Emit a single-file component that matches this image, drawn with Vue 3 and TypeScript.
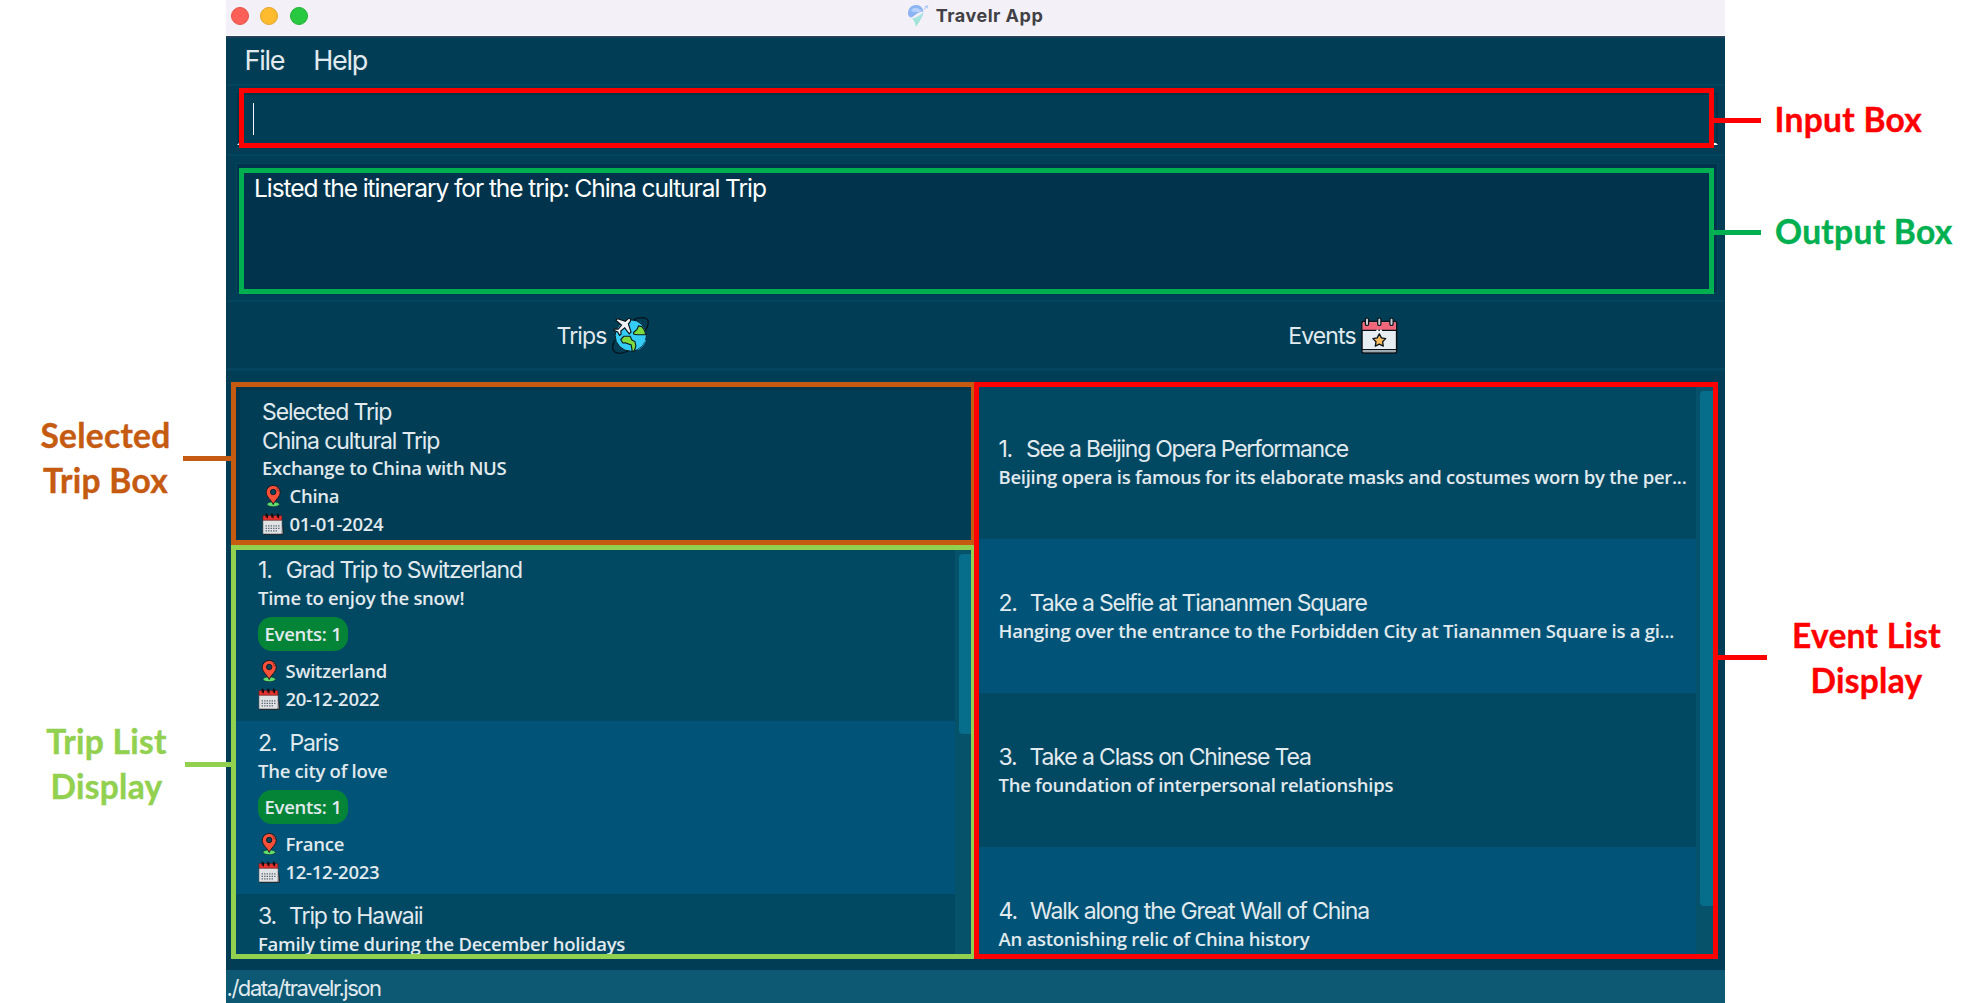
<script setup lang="ts">
interface Trip {
  name: string
  description: string
  details?: { events: number; location: string; date: string }
}

interface TripEvent {
  name: string
  description: string
  tracking: number
}

const menus = ['File', 'Help']

const selected = {
  name: 'China cultural Trip',
  description: 'Exchange to China with NUS',
  location: 'China',
  date: '01-01-2024',
}

const trips: Trip[] = [
  { name: 'Grad Trip to Switzerland', description: 'Time to enjoy the snow!', details: { events: 1, location: 'Switzerland', date: '20-12-2022' } },
  { name: 'Paris', description: 'The city of love', details: { events: 1, location: 'France', date: '12-12-2023' } },
  { name: 'Trip to Hawaii', description: 'Family time during the December holidays' },
]

const events: TripEvent[] = [
  { name: 'See a Beijing Opera Performance', description: 'Beijing opera is famous for its elaborate masks and costumes worn by the per...', tracking: -1.25 },
  { name: 'Take a Selfie at Tiananmen Square', description: 'Hanging over the entrance to the Forbidden City at Tiananmen Square is a gi...', tracking: -1.19 },
  { name: 'Take a Class on Chinese Tea', description: 'The foundation of interpersonal relationships', tracking: -1.14 },
  { name: 'Walk along the Great Wall of China', description: 'An astonishing relic of China history', tracking: -1.08 },
]
</script>

<template>
  <div class="page">
    <svg class="defs" width="0" height="0" aria-hidden="true">
      <symbol id="pin" viewBox="0 0 22 22">
        <ellipse cx="11.200" cy="19.300" rx="6.200" ry="2.500" fill="#5fe06c" stroke="#12303a" stroke-width="0.8" />
        <path d="M11.200 19.500C9.800 15.400 4.200 12 4.200 7.400a7 7 0 0 1 14 0c0 4.600-5.600 8-7 12.100z" fill="#f9503a" stroke="#1a1a20" stroke-width="1" />
        <circle cx="11.200" cy="7" r="2.700" fill="#024560" stroke="#1a1a20" stroke-width="1" />
        <path d="M14.700 3.200a5 5 0 0 1 1.600 3.200" fill="none" stroke="#7a1d18" stroke-width="0.8" />
      </symbol>
      <symbol id="date" viewBox="0 0 22 22">
        <path d="M2.500 21.600h18.300l.7-1.800-1-8z" fill="#8b9298" stroke="#111" stroke-width="0.8" />
        <path d="M.9 7h19.200v12.700L18.600 21H.9z" fill="#dfe3e6" stroke="#333" stroke-width="0.5" />
        <path d="M.9 2.600h19v4.600H.9z" fill="#e5332f" stroke="#5a1414" stroke-width="0.5" />
        <path d="M4.200.4v4.200M5.400 1.200v4M9.800.4v4.200M11 1.200v4M15.400.4v4.200M16.600 1.200v4" stroke="#14080a" stroke-width="1.100" />
        <path d="M3.600 12.800h14.600M3.600 15.300h14.600M3.600 17.800h11.600" stroke="#5c666e" stroke-width="1.300" stroke-dasharray="1.4 1.1" />
      </symbol>
    </svg>

    <aside class="side left">
      <p class="label selected-label">Selected<br />Trip Box</p>
      <p class="label list-label">Trip List<br />Display</p>
    </aside>

    <main class="app">
      <header class="titlebar">
        <div class="lights"><i class="close"></i><i class="min"></i><i class="max"></i></div>
        <svg class="logo" viewBox="0 0 21 23">
          <defs>
            <linearGradient id="tail" x1="0" y1="0" x2="0" y2="1">
              <stop offset="0" stop-color="#b4e3ea" />
              <stop offset="1" stop-color="#93e3cd" />
            </linearGradient>
          </defs>
          <path d="M0 9.500C0 4.500 3.500 1 8 1c4 0 7 2.500 7.400 6.500C10 7.500 5.500 13 2.600 13.600 1 12.500 0 11.200 0 9.500z" fill="#8ab4f3" />
          <path d="M3 6.500c2-2.500 4-3 6-2.500s3 2 5 2l-3 2.500c-3-1-5 .5-8-2z" fill="#b7d2fa" />
          <path d="M4 14.500c4-.5 8-3.500 11.500-6.500 0 5-4.500 9.500-7.500 15-.5-3.500-1.500-6-4-8.500z" fill="url(#tail)" />
          <path d="M15.500 5.500l2.200-2.200-1.400-1.200 2.200-.2L20.500.6l-1 2 .2 2.200-1.300-1.200-2.200 2.200z" fill="#9fc0f5" />
        </svg>
        <span>Travelr App</span>
      </header>

      <nav class="menubar">
        <span v-for="m in menus" :key="m">{{ m }}</span>
      </nav>

      <section class="command">
        <div class="field"><i class="caret"></i></div>
        <div class="frame red input-frame"></div>
      </section>

      <section class="result">
        <div class="output">Listed the itinerary for the trip: China cultural Trip</div>
        <div class="frame green output-frame"></div>
      </section>

      <section class="heads">
        <div class="head trips-head">
          <span>Trips</span>
          <svg width="37" height="37" viewBox="0 0 37 37">
            <path d="M20 3.500C27-.2 34-.2 35.800 3.300c1 2.600 0 6.400-2.300 10.200M3.500 22C.4 27 0 32 2.200 34.600c3 2.600 8.800 1.700 14-.6" fill="none" stroke="#05131b" stroke-width="1.300" />
            <circle cx="18.800" cy="18.500" r="15.700" fill="#35cdf6" stroke="#0a1a24" stroke-width="1" />
            <path d="M8.800 22.500l3-3.200h6.400l1.700 3.700 3 1.500 1 4.500-1.600 5h-2.100l-1-6-6-2.300-2.500.3z" fill="#7ddb3c" stroke="#0a1a24" stroke-width="1.100" />
            <path d="M21.500 15.500l3.500-3.200 1.600-3.400 3.400.7a15.500 15.500 0 0 1 3.700 8.200h-8.200l-3.600-.6z" fill="#7ddb3c" stroke="#0a1a24" stroke-width="1.100" />
            <path d="M33.700 23c-1.400 5-4 8-8 9.800" stroke="#2399c4" stroke-width="1" fill="none" />
            <path d="M18 1.500c-1-.9-2.700.8-4.500 2.700L5.500 1.600 3.700 3.300l5.800 4.800-3.300 4-3.500-.3-1 1.400 4 1.700 1.900 3.400 1.500-1-.3-3.300 3.900-3.100 4.500 6 1.800-1.900L16.400 7C18.200 5 19.500 2.800 18 1.500z" fill="#f1f4f6" stroke="#0a1218" stroke-width="1.200" />
          </svg>
        </div>
        <div class="head events-head">
          <span>Events</span>
          <svg width="37" height="37" viewBox="0 0 37 37">
            <rect x="1" y="4.500" width="34.600" height="31.500" rx="1.500" fill="#e7edf1" stroke="#0a1218" stroke-width="1.500" />
            <path d="M1.700 13V6.200q0-1 1-1h31.200q1 0 1 1V13z" fill="#f2667b" />
            <path d="M1 13.300h34.600M1 32.700h34.600" stroke="#0a1218" stroke-width="1.200" />
            <path d="M1.800 34.300h33" stroke="#9aa8ad" stroke-width="1.500" />
            <path d="M15.400 13.700h5.600" stroke="#fff" stroke-width="1.800" stroke-dasharray="2 1.500" />
            <g fill="#c9d2d8" stroke="#0a1218" stroke-width="1.200">
              <rect x="4.400" y="1" width="3.200" height="7.500" rx="1.600" />
              <rect x="16.700" y="1" width="3.200" height="7.500" rx="1.600" />
              <rect x="28.900" y="1" width="3.200" height="7.500" rx="1.600" />
            </g>
            <path d="M18.300 16.900l2.100 4 4.300.7-3.100 3.100.7 4.400-4-1.900-4 1.900.7-4.400-3.100-3.100 4.300-.7z" fill="#f9bd60" stroke="#0a1218" stroke-width="1.300" stroke-linejoin="round" />
          </svg>
        </div>
      </section>

      <section class="panels">
        <div class="column">
          <article class="panel selected">
            <h2>Selected Trip</h2>
            <h2>{{ selected.name }}</h2>
            <p>{{ selected.description }}</p>
            <p class="meta"><svg><use href="#pin" /></svg>{{ selected.location }}</p>
            <p class="meta"><svg><use href="#date" /></svg>{{ selected.date }}</p>
          </article>
          <div class="panel trip-panel">
            <div class="rows">
              <article v-for="(t, i) in trips" :key="t.name" class="trip">
                <h2><b>{{ i + 1 }}.</b>{{ t.name }}</h2>
                <p>{{ t.description }}</p>
                <template v-if="t.details">
                  <span class="badge">Events: {{ t.details.events }}</span>
                  <p class="meta"><svg><use href="#pin" /></svg>{{ t.details.location }}</p>
                  <p class="meta"><svg><use href="#date" /></svg>{{ t.details.date }}</p>
                </template>
              </article>
            </div>
            <div class="gutter"><i class="thumb trip-thumb"></i></div>
          </div>
        </div>
        <div class="panel event-panel">
          <div class="rows">
            <article v-for="(e, i) in events" :key="e.name" class="event">
              <h2 :style="{ letterSpacing: e.tracking + 'px' }"><b>{{ i + 1 }}.</b>{{ e.name }}</h2>
              <p>{{ e.description }}</p>
            </article>
          </div>
          <div class="gutter"><i class="thumb event-thumb"></i></div>
        </div>
      </section>

      <footer class="status">./data/travelr.json</footer>
    </main>

    <aside class="side right">
      <p class="label input-label">Input Box</p>
      <p class="label output-label">Output Box</p>
      <p class="label event-label">Event List<br />Display</p>
    </aside>
  </div>
</template>

<style>
body {
  margin: 0;
  background: #fff;
}
</style>

<style scoped>
.page {
  display: flex;
  width: 1976px;
  height: 1003px;
  overflow: hidden;
  font-family: Inter, "Liberation Sans", sans-serif;
  color: #e1eaee;
}
.page * {
  box-sizing: border-box;
}
.defs {
  position: absolute;
}
h2,
p {
  margin: 0;
  white-space: nowrap;
}

/* callout labels */
.side {
  flex: none;
  display: flex;
  flex-direction: column;
}
.left {
  width: 226px;
}
.right {
  width: 251px;
}
.label {
  font: 700 33.500px/45px Lato, "Open Sans", sans-serif;
  letter-spacing: 0.300px;
  -webkit-text-stroke: 0.400px currentColor;
}
.selected-label {
  width: 211px;
  margin-top: 413px;
  text-align: center;
  color: #c55a11;
}
.list-label {
  width: 213px;
  margin-top: 216px;
  text-align: center;
  color: #92d050;
}
.input-label {
  margin: 97px 0 0 49.500px;
  color: #f00;
}
.output-label {
  margin: 67px 0 0 50px;
  color: #00b050;
}
.event-label {
  width: 283px;
  margin-top: 359px;
  text-align: center;
  color: #f00;
}

/* window */
.app {
  flex: none;
  display: flex;
  flex-direction: column;
  width: 1499px;
  height: 1003px;
  background: #013e56;
}
.titlebar {
  flex: none;
  position: relative;
  display: flex;
  align-items: center;
  justify-content: center;
  gap: 7px;
  height: 38px;
  padding-bottom: 5px;
  border-bottom: 2px solid #23405a;
  background: linear-gradient(#f3f0f7 35px, #fff 35px);
  color: #414044;
  font-size: 18px;
  font-weight: 700;
  letter-spacing: 0.500px;
}
.lights {
  position: absolute;
  left: 5px;
  top: 7px;
  display: flex;
  gap: 11.300px;
}
.lights i {
  width: 18px;
  height: 18px;
  border-radius: 50%;
}
.close {
  background: #fe5f57;
  border: 1px solid #e2524a;
}
.min {
  background: #febb2e;
  border: 1px solid #e0a528;
}
.max {
  background: #28c840;
  border: 1px solid #24b038;
}
.logo {
  width: 21px;
  height: 23px;
}
.menubar {
  flex: none;
  display: flex;
  gap: 29px;
  height: 48px;
  padding: 0 18.500px;
  border-bottom: 2px solid #03455e;
  font-size: 27px;
  line-height: 45px;
  letter-spacing: -1.250px;
}

/* callout frames */
.frame {
  position: absolute;
  border: 5px solid;
}
.frame::after,
.panel::after {
  content: "";
  position: absolute;
  height: 5px;
}
.red {
  border-color: #f00;
}
.green {
  border-color: #00b050;
}
.red::after {
  background: #f00;
}
.green::after {
  background: #00b050;
}
.command {
  flex: none;
  position: relative;
  height: 70px;
  padding: 7px 7.500px 0 11px;
  border-bottom: 2px solid #03455e;
}
.field {
  height: 52px;
  padding: 8px 0 0 13.500px;
  border: 2px solid #023349;
  border-bottom: 2px solid #fff;
  background: #013e56;
}
.caret {
  display: block;
  width: 1.500px;
  height: 32px;
  background: #f4f8fa;
}
.input-frame {
  left: 13px;
  top: 2px;
  width: 1475px;
  height: 60px;
}
.input-frame::after {
  left: 1470px;
  top: 25px;
  width: 47px;
}
.result {
  flex: none;
  position: relative;
  height: 146px;
  padding: 7px 7px 0 10px;
  border-bottom: 2px solid #03455e;
}
.output {
  height: 130px;
  padding: 4px 0 0 17px;
  border: 1px solid #03455e;
  background: #01344c;
  color: #fff;
  font-size: 24.500px;
  line-height: 40px;
  letter-spacing: -1.060px;
}
.output-frame {
  left: 13px;
  top: 12px;
  width: 1475px;
  height: 126px;
}
.output-frame::after {
  left: 1470px;
  top: 57px;
  width: 47px;
}
.heads {
  flex: none;
  display: flex;
  height: 69px;
  border-bottom: 3px solid #03455e;
  font-size: 23px;
  letter-spacing: -0.850px;
}
.head {
  display: flex;
  align-items: center;
  justify-content: center;
  gap: 5px;
}
.head span {
  padding-top: 2px;
}
.trips-head {
  width: 753px;
}
.events-head {
  width: 728px;
}

/* panels */
.panels {
  flex: none;
  display: flex;
  height: 577px;
  margin: 11px 7px 0 5px;
}
.panel {
  position: relative;
  border: 5px solid;
}
.column {
  width: 745px;
}
h2 {
  padding-top: 1px;
  margin-bottom: -1px;
  font-size: 23px;
  font-weight: 400;
  line-height: 29px;
  letter-spacing: -1.120px;
}
h2 b {
  margin-right: 13px;
  font-weight: 400;
}
article:first-child b {
  margin-right: 14px;
}
.panel p,
.badge {
  font: 600 18.500px/28px "Open Sans", "Noto Sans", sans-serif;
  letter-spacing: -0.270px;
}
.meta {
  display: flex;
  align-items: center;
  gap: 5.500px;
}
.meta svg {
  width: 22px;
  height: 22px;
}
.selected {
  height: 163px;
  padding: 10px 0 0 26px;
  border-color: #c55a11;
  background: #013e56;
  box-shadow: inset 4px 3px 0 #02364c;
}
.selected h2 {
  margin-bottom: -1.500px;
}
.selected::after {
  left: -53px;
  top: 69px;
  width: 48px;
  background: #c55a11;
}
.trip-panel {
  display: flex;
  height: 414px;
  border-color: #92d050;
}
.trip-panel::after {
  left: -51px;
  top: 212px;
  width: 46px;
  background: #92d050;
}
.rows {
  flex: 1;
  min-width: 0;
  height: 100%;
  overflow: hidden;
}
.trip {
  height: 172.500px;
  padding: 7px 0 0 22px;
  background: #014863;
}
.trip:first-child {
  height: 171px;
  padding-top: 5px;
}
.trip:nth-child(even),
.event:nth-child(even) {
  background: #015477;
}
.badge {
  display: block;
  width: 90px;
  height: 34px;
  margin: 5px 0 6px;
  border-radius: 14px;
  background: #048437;
  line-height: 34px;
  text-align: center;
}
.gutter {
  flex: none;
  width: 16px;
  padding: 4px 0 0 4px;
  background: #07526b;
}
.thumb {
  display: block;
  border-radius: 4px 0 0 4px;
  background: #066d8a;
}
.trip-thumb {
  height: 180px;
}
.event-thumb {
  height: 515px;
}
.event-panel {
  display: flex;
  width: 744px;
  margin-left: -2px;
  border-color: #f00;
}
.event-panel::after {
  left: 739px;
  top: 268px;
  width: 49px;
  background: #f00;
}
.event-panel .gutter {
  width: 17px;
}
.event {
  display: flex;
  flex-direction: column;
  justify-content: center;
  height: 154px;
  padding-left: 19.500px;
  background: #014863;
}
.event:first-child {
  height: 152px;
  padding-bottom: 2px;
}
.status {
  flex: 1;
  margin-top: 11px;
  padding-left: 0.500px;
  background: #0d5872;
  font-size: 22px;
  line-height: 37px;
  letter-spacing: -1.450px;
}
</style>
